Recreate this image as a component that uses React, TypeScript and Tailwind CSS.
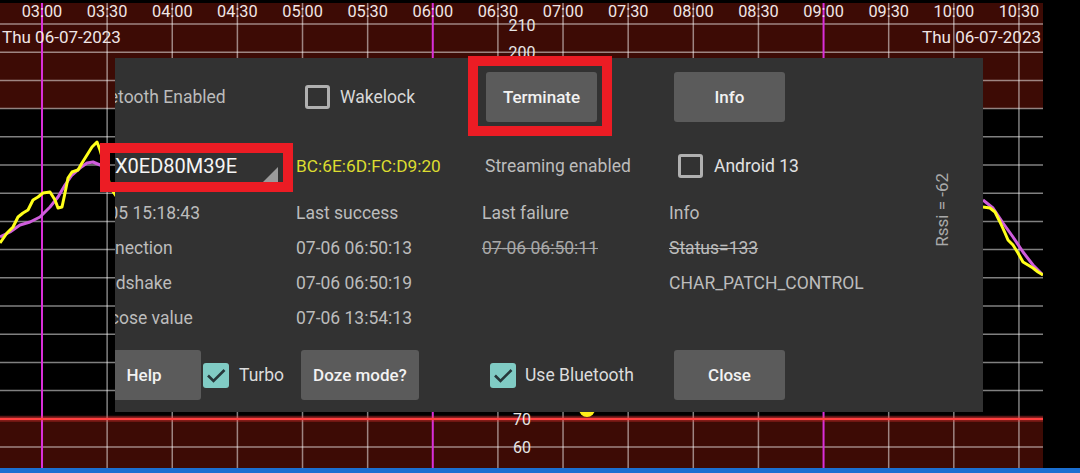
import React from "react";

const X0 = 42;
const DX = 65.13;
const Y0 = 24;
const DY = 28.2;

const times = [
  "03:00", "03:30", "04:00", "04:30", "05:00", "05:30", "06:00", "06:30",
  "07:00", "07:30", "08:00", "08:30", "09:00", "09:30", "10:00", "10:30",
];

function Chart() {
  const hs = Array.from({ length: 16 }, (_, k) => Y0 + DY * k);
  const vs = times.map((_, k) => X0 + DX * k);
  return (
    <svg width={1043} height={468} className="block shrink-0">
      <rect x={0} y={0} width={1043} height={468} fill="#000" />
      <rect x={0} y={3} width={1043} height={105.6} fill="#3d0b05" />
      <rect x={0} y={418.8} width={1043} height={49.2} fill="#3d0b05" />
      {hs.map((y, k) =>
        k === 14 ? null : (
          <line key={"h" + k} x1={0} x2={1043} y1={y} y2={y} stroke="#fff" strokeOpacity={0.5} strokeWidth={1.5} />
        )
      )}
      {vs.map((x, k) => (
        <line
          key={"v" + k}
          x1={x}
          x2={x}
          y1={3}
          y2={468}
          stroke={k % 6 === 0 ? "#d92fd9" : "#fff"}
          strokeOpacity={k % 6 === 0 ? 1 : 0.5}
          strokeWidth={k % 6 === 0 ? 2 : 1.5}
        />
      ))}
      <line x1={0} x2={1043} y1={418.8} y2={418.8} stroke="#ff3b3b" strokeOpacity={0.35} strokeWidth={6} />
      <line x1={0} x2={1043} y1={418.8} y2={418.8} stroke="#ff4040" strokeWidth={2.2} />

      <polyline
        points="0,237 10,232 20,225 30,222 40,217 50,207 58,197 65,185 72,175 80,168 87,163 93,162 100,165 106,168"
        fill="none" stroke="#cf5ddc" strokeWidth={3} strokeLinejoin="round"
      />
      <polyline
        points="0,243 7,233 13,227 18,217 23,213 28,210 33,200 38,197 43,193 50,192 55,200 58,208 62,207 65,193 68,178 72,172 78,170 82,163 87,155 92,147 97,142 100,150 103,160 106,172 109,182 112,190 116,196"
        fill="none" stroke="#ffff1a" strokeWidth={3} strokeLinejoin="round"
      />
      <polyline
        points="983,200 993,208 1003,223 1013,237 1023,252 1033,265 1043,275"
        fill="none" stroke="#cf5ddc" strokeWidth={3} strokeLinejoin="round"
      />
      <polyline
        points="983,207 990,208 995,212 1000,222 1005,233 1008,240 1013,245 1018,253 1023,262 1028,265 1033,268 1038,272 1043,275"
        fill="none" stroke="#ffff1a" strokeWidth={3} strokeLinejoin="round"
      />
      <circle cx={587} cy={409} r={8} fill="#ffef1a" />

      {times.map((t, k) => (
        <text key={t} x={vs[k]} y={17} textAnchor="middle" fontSize={16.3} fill="#f0e6e6">
          {t}
        </text>
      ))}
      <text x={2} y={42.5} fontSize={17} fill="#f0e6e6">Thu 06-07-2023</text>
      <text x={1041} y={42.5} fontSize={17} fill="#f0e6e6" textAnchor="end">Thu 06-07-2023</text>
      <text x={522} y={30.5} fontSize={16} fill="#e6e6e6" textAnchor="middle">210</text>
      <text x={522} y={58} fontSize={16} fill="#e6e6e6" textAnchor="middle">200</text>
      <text x={522} y={424.5} fontSize={16} fill="#e6e6e6" textAnchor="middle">70</text>
      <text x={522} y={452.5} fontSize={16} fill="#e6e6e6" textAnchor="middle">60</text>
    </svg>
  );
}

function Box({ checked }: { checked?: boolean }) {
  if (checked) {
    return (
      <span className="w-[26px] h-[25px] shrink-0 rounded-[3px] bg-[#80cbc4] flex items-center justify-center">
        <svg width="26" height="25" viewBox="0 0 26 25">
          <path d="M5 12.5 L10.5 18 L21.5 7" stroke="#26373a" strokeWidth={2.6} fill="none" />
        </svg>
      </span>
    );
  }
  return <span className="w-[25px] h-[24px] shrink-0 rounded-[3px] border-[3px] border-[#b0b0b0]" />;
}

function Btn({ label, w, ml }: { label: string; w: string; ml: string }) {
  return (
    <div className={`${w} ${ml} h-[50px] rounded-[3px] bg-[#5b5b5b] flex items-center justify-center text-[17px] font-medium text-[#f2f2f2]`}>
      {label}
    </div>
  );
}

const row = "grid grid-cols-[212px_186px_187px_261px] items-center text-[17.5px] leading-[20px] text-[#bcbcbc]";

export default function App() {
  return (
    <div className="relative w-[1080px] h-[473px] overflow-hidden bg-black font-['Roboto',sans-serif]">
      <div className="flex flex-col">
        <div className="flex h-[468px]">
          <Chart />
          <div className="flex-1 bg-black" />
        </div>
        <div className="h-[5px] bg-[#1b6fd1]" />
      </div>

      <div className="absolute left-[115px] top-[58px] w-[868px] h-[354px] bg-[#323232] overflow-hidden">
        <div className="ml-[-31px] flex pt-[14px]">
          <div className="w-[846px] shrink-0 flex flex-col">
            <div className={`${row} h-[50px]`}>
              <span className="whitespace-nowrap">Bluetooth Enabled</span>
              <div className="flex items-center pl-[9px]">
                <Box />
                <span className="ml-[10px] text-[#d8d8d8]">Wakelock</span>
              </div>
              <Btn label="Terminate" w="w-[111px]" ml="ml-[4px]" />
              <Btn label="Info" w="w-[111px]" ml="ml-[5px]" />
            </div>

            <div className={`${row} h-[40px] mt-[24px]`}>
              <div className="flex h-[40px] items-center">
                <span className="ml-[31px] text-[20px] text-[#f5f5f5]">X0ED80M39E</span>
                <svg width="15" height="15" viewBox="0 0 15 15" className="ml-auto mr-[18px] self-end mb-[4px]">
                  <polygon points="15,0 15,15 0,15" fill="#9a9a9a" />
                </svg>
              </div>
              <span className="text-[17.3px] text-[#dcdc30] whitespace-nowrap">BC:6E:6D:FC:D9:20</span>
              <span className="ml-[3px] whitespace-nowrap">Streaming enabled</span>
              <div className="flex items-center pl-[9px]">
                <Box />
                <span className="ml-[11px] text-[#e2e2e2]">Android 13</span>
              </div>
            </div>

            <div className={`${row} h-[34px] mt-[10px]`}>
              <span className="whitespace-nowrap">07-05 15:18:43</span>
              <span>Last success</span>
              <span>Last failure</span>
              <span>Info</span>
            </div>
            <div className={`${row} h-[35px]`}>
              <span>Connection</span>
              <span>07-06 06:50:13</span>
              <span className="line-through text-[#a8a8a8]">07-06 06:50:11</span>
              <span className="line-through">Status=133</span>
            </div>
            <div className={`${row} h-[35px]`}>
              <span>Handshake</span>
              <span>07-06 06:50:19</span>
              <span />
              <span>CHAR_PATCH_CONTROL</span>
            </div>
            <div className={`${row} h-[35px]`}>
              <span>Glucose value</span>
              <span>07-06 13:54:13</span>
              <span />
              <span />
            </div>

            <div className={`${row} h-[50px] mt-[15px]`}>
              <div className="flex items-center">
                <Btn label="Help" w="w-[114px]" ml="ml-[3px]" />
                <span className="ml-[2px]"><Box checked /></span>
                <span className="ml-[10px] text-[#dcdcdc]">Turbo</span>
              </div>
              <Btn label="Doze mode?" w="w-[118px]" ml="ml-[5px]" />
              <div className="flex items-center pl-[8px]">
                <Box checked />
                <span className="ml-[9px] text-[#dcdcdc] whitespace-nowrap">Use Bluetooth</span>
              </div>
              <Btn label="Close" w="w-[111px]" ml="ml-[5px]" />
            </div>
          </div>
          <div className="w-[24px] shrink-0 flex items-start justify-center pt-[101px]">
            <span className="[writing-mode:vertical-rl] rotate-180 text-[17px] leading-[20px] text-[#a9a9a9] whitespace-nowrap">
              Rssi = -62
            </span>
          </div>
        </div>
      </div>

      <div className="absolute left-[468px] top-[56px] w-[144px] h-[80px] border-[10px] border-[#ec1c24]" />
      <div className="absolute left-[100px] top-[143px] w-[193px] h-[49px] border-[10px] border-[#ec1c24]" />
    </div>
  );
}
